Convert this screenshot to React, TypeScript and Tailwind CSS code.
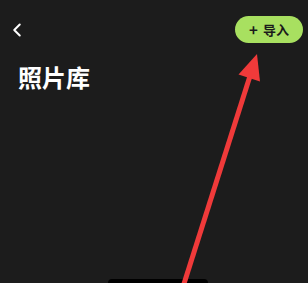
import { ChevronLeft } from "lucide-react";

function Arrow() {
  return (
    <svg
      className="pointer-events-none absolute inset-0"
      width={308}
      height={283}
      viewBox="0 0 308 283"
    >
      <line x1={182} y1={290} x2={250} y2={76} stroke="#f03a3a" strokeWidth={5} />
      <polygon points="257,54 238.5,74.5 260,81.5" fill="#f03a3a" />
    </svg>
  );
}

export default function App() {
  return (
    <div
      className="relative flex h-[283px] w-[308px] flex-col overflow-hidden bg-[#1c1c1c]"
      style={{ fontFamily: '"Noto Sans CJK SC", "Noto Sans", sans-serif' }}
    >
      <div className="flex h-[27px] items-center justify-between pl-[6px] pr-[5px] mt-4">
        <ChevronLeft size={22} strokeWidth={2.2} className="text-white" />
        <button className="flex h-[27px] w-[68px] items-center justify-center gap-[5px] rounded-full bg-[#a8e060] text-[13px] font-bold leading-none text-[#1b1b1b]">
          <span className="text-[15px] font-semibold">+</span>
          <span>导入</span>
        </button>
      </div>

      <h1 className="mt-[22px] pl-[18px] text-[24px] font-bold leading-none text-white">
        照片库
      </h1>

      <div className="mt-auto ml-[108px] h-[4px] w-[100px] rounded-t-[8px] bg-black" />

      <Arrow />
    </div>
  );
}
